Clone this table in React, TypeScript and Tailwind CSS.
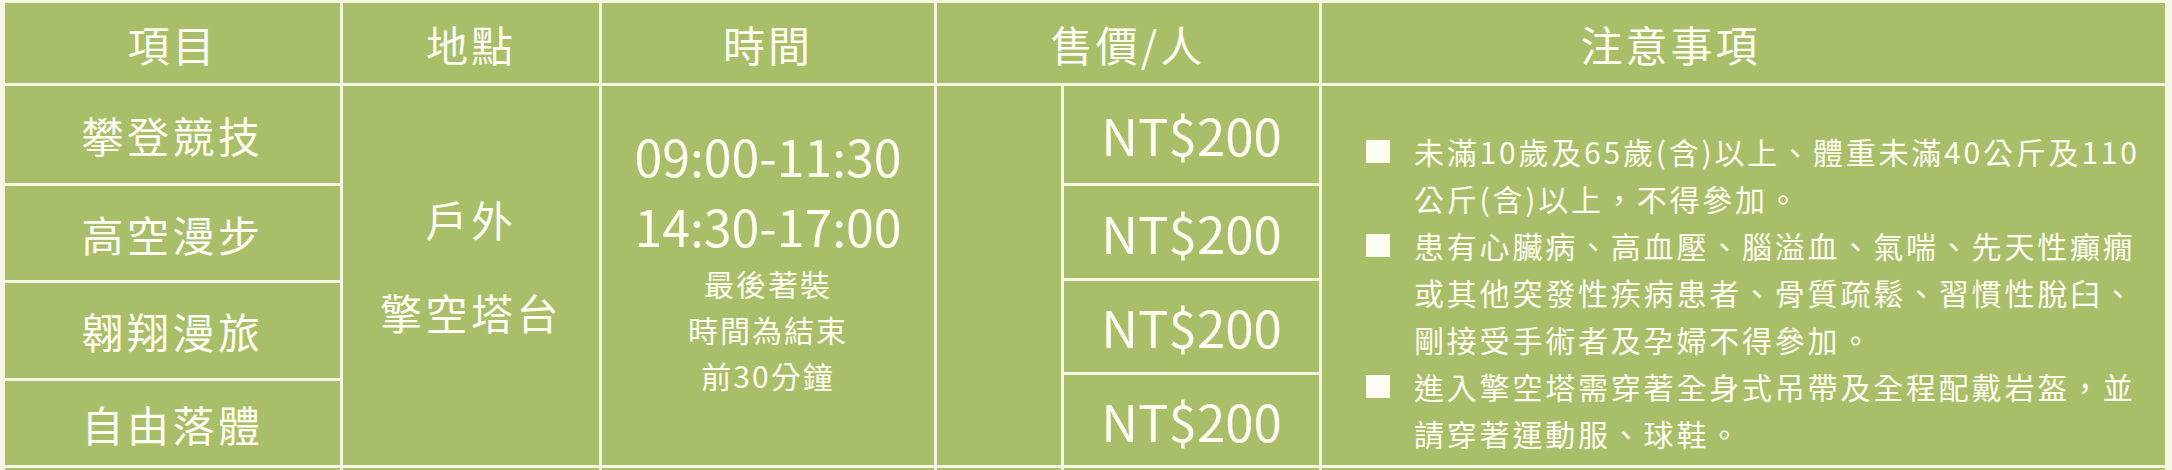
const green = "bg-[#a9be69]";

const Cell = ({ className = "", children }: { className?: string; children?: React.ReactNode }) => (
  <div className={`${green} flex items-center justify-center ${className}`}>{children}</div>
);

const items = [
  { name: "攀登競技", h: "h-[97px]" },
  { name: "高空漫步", h: "h-[94px]" },
  { name: "翱翔漫旅", h: "h-[95px]" },
  { name: "自由落體", h: "flex-1" },
];

const prices = ["h-[97px]", "h-[92px]", "h-[91px]", "flex-1"];

const notes = [
  ["未滿10歲及65歲(含)以上、體重未滿40公斤及110", "公斤(含)以上，不得參加。"],
  ["患有心臟病、高血壓、腦溢血、氣喘、先天性癲癇", "或其他突發性疾病患者、骨質疏鬆、習慣性脫臼、", "剛接受手術者及孕婦不得參加。"],
  ["進入擎空塔需穿著全身式吊帶及全程配戴岩盔，並", "請穿著運動服、球鞋。"],
];

export default function App() {
  return (
    <div
      lang="zh-Hant-TW"
      className="w-[2172px] h-[470px] overflow-hidden bg-[#f6f7e2] pt-[3px] pl-[5px] font-['Noto_Sans_CJK_TC','Noto_Sans',sans-serif] text-[#fcfcf0]"
    >
      <div className="w-[2160px] flex flex-col gap-[3px]">
        {/* header */}
        <div className="flex gap-[3px] h-[80px] text-[42px] tracking-[3px]">
          <Cell className="w-[335px]">項目</Cell>
          <Cell className="w-[256px]">地點</Cell>
          <Cell className="w-[332px]">時間</Cell>
          <Cell className="w-[382px]">售價/人</Cell>
          <Cell className="w-[843px] pr-[146px]">注意事項</Cell>
        </div>

        {/* body */}
        <div className="flex gap-[3px] h-[379px]">
          <div className="w-[335px] flex flex-col gap-[3px]">
            {items.map((it) => (
              <Cell key={it.name} className={`${it.h} text-[42px] tracking-[3.5px]`}>
                {it.name}
              </Cell>
            ))}
          </div>

          <div className={`${green} w-[256px] flex flex-col items-center pt-[86px] text-[42px] tracking-[3.5px] leading-[93px]`}>
            <div>戶外</div>
            <div>擎空塔台</div>
          </div>

          <div className={`${green} w-[332px] flex flex-col items-center pt-[34px]`}>
            <div className="text-[50px] leading-[70px]">09:00-11:30</div>
            <div className="text-[50px] leading-[70px]">14:30-17:00</div>
            <div className="text-[30px] leading-[46px] tracking-[2px]">最後著裝</div>
            <div className="text-[30px] leading-[46px] tracking-[2px]">時間為結束</div>
            <div className="text-[30px] leading-[46px] tracking-[2px]">前30分鐘</div>
          </div>

          <div className={`${green} w-[124px]`} />

          <div className="w-[255px] flex flex-col gap-[3px]">
            {prices.map((h, i) => (
              <Cell key={i} className={`${h} text-[51px]`}>
                NT$200
              </Cell>
            ))}
          </div>

          <div className={`${green} w-[843px] pt-[42px] pl-[44px] flex flex-col text-[30px] leading-[47px] tracking-[2.8px] whitespace-nowrap`}>
            {notes.map((lines, i) => (
              <div key={i} className="flex">
                <div className="w-[48px] shrink-0 h-[47px] flex items-center">
                  <div className="w-[24px] h-[23px] bg-[#fcfcf0]" />
                </div>
                <div className="flex flex-col">
                  {lines.map((l) => (
                    <div key={l}>{l}</div>
                  ))}
                </div>
              </div>
            ))}
          </div>
        </div>

        {/* next row, cut off */}
        <div className="flex gap-[3px] h-[10px]">
          <div className={`${green} w-[335px]`} />
          <div className={`${green} w-[256px]`} />
          <div className={`${green} w-[332px]`} />
          <div className={`${green} w-[124px]`} />
          <div className={`${green} w-[255px]`} />
          <div className={`${green} w-[843px]`} />
        </div>
      </div>
    </div>
  );
}
